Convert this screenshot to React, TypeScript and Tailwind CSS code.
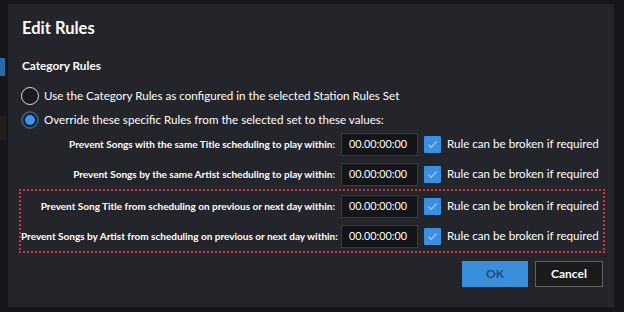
import React from "react";

const rows = [
  { label: "Prevent Songs with the same Title scheduling to play within:", boxed: false },
  { label: "Prevent Songs by the same Artist scheduling to play within:", boxed: false },
  { label: "Prevent Song Title from scheduling on previous or next day within:", boxed: true },
  { label: "Prevent Songs by Artist from scheduling on previous or next day within:", boxed: true },
];

const font = { fontFamily: 'Lato, "Liberation Sans", sans-serif' };

function CheckBox() {
  return (
    <div className="w-[17px] h-[17px] bg-[#3a8fe2] rounded-[1px] flex items-center justify-center shrink-0">
      <svg width="11" height="9" viewBox="0 0 11 9">
        <path d="M1.5 4.8 L4.2 7.3 L9.6 1.5" fill="none" stroke="#9fc9f2" strokeWidth="1.3" />
      </svg>
    </div>
  );
}

function RuleRow({ label }: { label: string }) {
  return (
    <div className="flex items-center h-[30px]">
      <div className="w-[314px] shrink-0 text-right text-[10px] font-bold text-white whitespace-nowrap">{label}</div>
      <div className="ml-[6px] w-[77px] h-[23px] shrink-0 bg-[#141518] border border-[#3a3b40] flex items-center pl-[7px] text-[10.8px] text-white">
        00.00:00:00
      </div>
      <div className="ml-[6px]">
        <CheckBox />
      </div>
      <div className="ml-[6px] text-[11.6px] text-white whitespace-nowrap">Rule can be broken if required</div>
    </div>
  );
}

export default function App() {
  const plain = rows.filter((r) => !r.boxed);
  const boxed = rows.filter((r) => r.boxed);
  return (
    <div className="w-[624px] h-[312px] bg-[#15161b] flex overflow-hidden" style={font}>
      {/* background app strip */}
      <div className="w-[8px] flex flex-col pt-[58px]">
        <div className="h-[18px] w-[5px] bg-[#2b6aa8]" />
        <div className="h-[24px] mt-[40px] w-[6px] bg-[#22201c]" />
      </div>

      {/* dialog */}
      <div className="mt-[4px] w-[606px] h-[303px] bg-[#24252a] flex flex-col pl-[11px] pr-[11px]">
        <h2 className="mt-[12px] ml-[3px] text-[16.5px] font-bold text-white leading-[24px]">Edit Rules</h2>
        <div className="mt-[17px] ml-[3px] text-[11.8px] font-bold text-white leading-[18px]">Category Rules</div>

        <div className="mt-[11px] ml-[2px] flex items-center gap-[5px] h-[20px]">
          <div className="w-[18px] h-[18px] rounded-full border-[1.5px] border-[#d8d8d8] bg-[#1a1b1f]" />
          <span className="text-[11.6px] text-white">Use the Category Rules as configured in the selected Station Rules Set</span>
        </div>
        <div className="mt-[4px] ml-[2px] flex items-center gap-[5px] h-[20px]">
          <div className="w-[18px] h-[18px] rounded-full border-[2px] border-[#34597e] bg-[#1a1b1f] flex items-center justify-center">
            <div className="w-[10px] h-[10px] rounded-full bg-[#3b95f2]" />
          </div>
          <span className="text-[11.6px] text-white">Override these specific Rules from the selected set to these values:</span>
        </div>

        <div className="mt-[-3px] border-2 border-transparent border-b-0">
          {plain.map((r) => (
            <RuleRow key={r.label} label={r.label} />
          ))}
        </div>
        <div className="border-2 border-dotted border-[#c93244] w-[586px]">
          {boxed.map((r) => (
            <RuleRow key={r.label} label={r.label} />
          ))}
        </div>

        <div className="mt-[8px] flex justify-end gap-[7px]">
          <button className="w-[66px] h-[26px] bg-[#3a8fdd] text-[#1d4a78] text-[12px] font-bold">OK</button>
          <button className="w-[68px] h-[26px] bg-[#1b1b1c] border border-[#5e5e60] text-white text-[12px] font-bold">Cancel</button>
        </div>
      </div>
    </div>
  );
}
